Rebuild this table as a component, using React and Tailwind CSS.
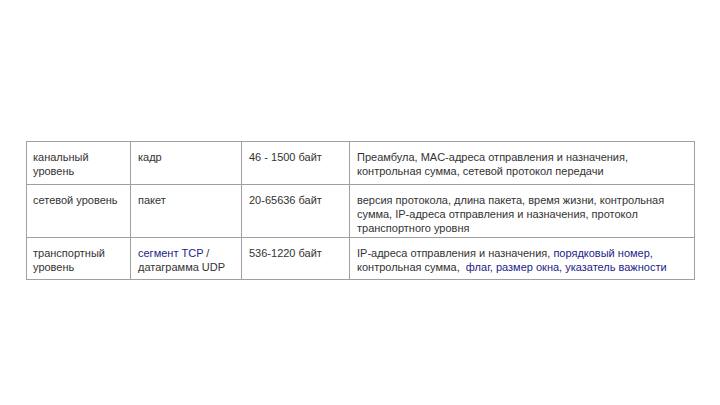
import React from 'react';

const rows = [
  {
    h: 'h-[42px]',
    a: 'канальный уровень',
    b: <>кадр</>,
    c: '46 - 1500 байт',
    d: <>Преамбула, MAC-адреса отправления и назначения,<br />контрольная сумма, сетевой протокол передачи</>,
  },
  {
    h: 'h-[53px]',
    a: 'сетевой уровень',
    b: <>пакет</>,
    c: '20-65636 байт',
    d: <>версия протокола, длина пакета, время жизни, контрольная<br />сумма, IP-адреса отправления и назначения, протокол<br />транспортного уровня</>,
  },
  {
    h: 'h-[42px]',
    a: 'транспортный уровень',
    b: <><span className="text-[#1c1c8a]">сегмент TCP</span> /<br />датаграмма UDP</>,
    c: '536-1220 байт',
    d: <>IP-адреса отправления и назначения, <span className="text-[#1c1c8a]">порядковый номер,</span><br />контрольная сумма,  <span className="text-[#1c1c8a]">флаг, размер окна, указатель важности</span></>,
  },
];

export default function App() {
  return (
    <div className="w-[720px] h-[405px] bg-white pt-[141px] pl-[26px]" style={{ fontFamily: '"Liberation Sans", Arial, sans-serif' }}>
      <div className="w-[669px] border border-[#a0a0a0] text-[11px] leading-[14px] text-[#333]">
        {rows.map((r, i) => (
          <div key={i} className={`grid grid-cols-[104px_111px_108px_1fr] ${r.h} ${i > 0 ? 'border-t border-[#a0a0a0]' : ''}`}>
            <div className="pl-[6px] pr-[4px] pt-[8px] border-r border-[#a0a0a0]">{r.a}</div>
            <div className="pl-[7px] pt-[8px] border-r border-[#a0a0a0]">{r.b}</div>
            <div className="pl-[7px] pt-[8px] border-r border-[#a0a0a0]">{r.c}</div>
            <div className="pl-[7px] pt-[8px] whitespace-pre">{r.d}</div>
          </div>
        ))}
      </div>
    </div>
  );
}
